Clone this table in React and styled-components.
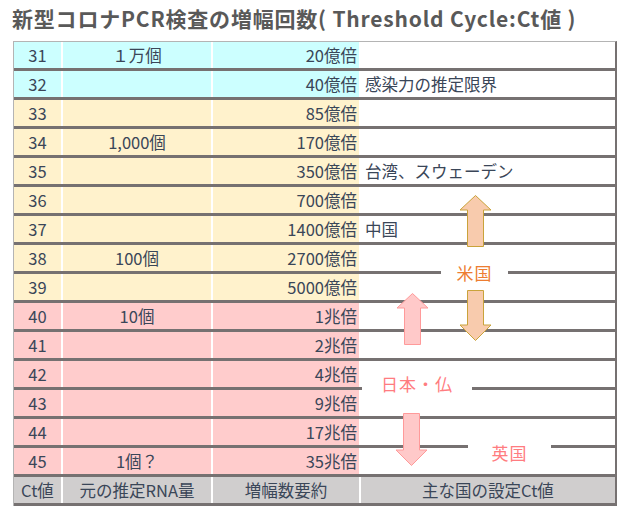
import styled, { createGlobalStyle } from 'styled-components';

const GlobalStyle = createGlobalStyle`
  body {
    margin: 0;
    background: #fff;
    font-family: "Noto Sans CJK JP", "Noto Sans", sans-serif;
  }
`;

const BORDER = '#767171';
const TEXT = '#3a4658';

const BANDS = {
  cyan: '#ccffff',
  cream: '#fff2cc',
  pink: '#ffcccc',
};

const rows = [
  { ct: 31, band: 'cyan', rna: '１万個', amp: '20億倍' },
  { ct: 32, band: 'cyan', amp: '40億倍', note: '感染力の推定限界' },
  { ct: 33, band: 'cream', amp: '85億倍' },
  { ct: 34, band: 'cream', rna: '1,000個', amp: '170億倍' },
  { ct: 35, band: 'cream', amp: '350億倍', note: '台湾、スウェーデン' },
  { ct: 36, band: 'cream', amp: '700億倍' },
  { ct: 37, band: 'cream', amp: '1400億倍', note: '中国' },
  { ct: 38, band: 'cream', rna: '100個', amp: '2700億倍' },
  { ct: 39, band: 'cream', amp: '5000億倍' },
  { ct: 40, band: 'pink', rna: '10個', amp: '1兆倍' },
  { ct: 41, band: 'pink', amp: '2兆倍' },
  { ct: 42, band: 'pink', amp: '4兆倍' },
  { ct: 43, band: 'pink', amp: '9兆倍' },
  { ct: 44, band: 'pink', amp: '17兆倍' },
  { ct: 45, band: 'pink', rna: '1個？', amp: '35兆倍' },
];

const Page = styled.div`
  width: 625px;
  height: 516px;
`;

const Title = styled.h1`
  margin: 0;
  padding-left: 12px;
  height: 41px;
  line-height: 37px;
  font-size: 21px;
  font-weight: 700;
  color: #595959;
  white-space: nowrap;
  letter-spacing: 0.8px;
`;

const Table = styled.div`
  position: relative;
  box-sizing: border-box;
  margin-left: 13px;
  width: 604px;
  border-top: 1px solid #b4b4b4;
  border-left: 1px solid #b4b4b4;
  border-right: 2px solid ${BORDER};
`;

const Row = styled.div`
  display: grid;
  grid-template-columns: 47px 148px 146px 1fr;
  column-gap: 2px;
  background: #fff;
  border-bottom: 3px solid ${BORDER};
`;

const Cell = styled.div`
  height: 26px;
  line-height: 26px;
  font-size: 16.5px;
  color: ${TEXT};
  white-space: nowrap;
  background: ${(p) => p.$bg || '#fff'};
  text-align: ${(p) => p.$align || 'center'};
  padding: ${(p) => (p.$align === 'right' ? '0 2px 0 0' : p.$align === 'left' ? '0 0 0 4px' : '0')};
`;

const Label = styled.div`
  position: absolute;
  height: 22px;
  line-height: 22px;
  background: #fff;
  text-align: center;
  font-size: 17px;
  color: ${(p) => p.$color};
  letter-spacing: 1px;
`;

const Arrow = styled.svg`
  position: absolute;
  overflow: visible;
`;

function UpArrow({ left, top, height, fill, stroke }) {
  return (
    <Arrow style={{ left, top }} width="32" height={height} viewBox={`0 0 32 ${height}`}>
      <path
        d={`M15.5 0.5 L31 15 L23.5 15 L23.5 ${height - 0.5} L7.5 ${height - 0.5} L7.5 15 L0 15 Z`}
        fill={fill}
        stroke={stroke}
        strokeWidth="1"
      />
    </Arrow>
  );
}

function DownArrow({ left, top, height, fill, stroke }) {
  return (
    <Arrow style={{ left, top }} width="32" height={height} viewBox={`0 0 32 ${height}`}>
      <path
        d={`M7.5 0.5 L23.5 0.5 L23.5 ${height - 16} L31 ${height - 16} L15.5 ${height - 0.5} L0 ${height - 16} L7.5 ${height - 16} Z`}
        fill={fill}
        stroke={stroke}
        strokeWidth="1"
      />
    </Arrow>
  );
}

export default function App() {
  const footBg = '#d0cece';
  return (
    <Page>
      <GlobalStyle />
      <Title>新型コロナPCR検査の増幅回数( Threshold Cycle:Ct値 )</Title>
      <Table>
        {rows.map((r) => (
          <Row key={r.ct}>
            <Cell $bg={BANDS[r.band]}>{r.ct}</Cell>
            <Cell $bg={BANDS[r.band]}>{r.rna}</Cell>
            <Cell $bg={BANDS[r.band]} $align="right">{r.amp}</Cell>
            <Cell $align="left">{r.note}</Cell>
          </Row>
        ))}
        <Row>
          <Cell $bg={footBg}>Ct値</Cell>
          <Cell $bg={footBg}>元の推定RNA量</Cell>
          <Cell $bg={footBg}>増幅数要約</Cell>
          <Cell $bg={footBg}>主な国の設定Ct値</Cell>
        </Row>

        <UpArrow left={446} top={153} height={52} fill="#f8cbad" stroke="#c9a33a" />
        <Label $color="#ed7d31" style={{ left: 427, top: 220, width: 67 }}>米国</Label>
        <DownArrow left={446} top={248} height={51} fill="#f8cbad" stroke="#c9a33a" />

        <UpArrow left={383} top={251} height={52} fill="#ffc9c9" stroke="#ff9a9a" />
        <Label $color="#ff7c80" style={{ left: 348, top: 331, width: 110 }}>日本・仏</Label>
        <DownArrow left={382} top={371} height={53} fill="#ffc9c9" stroke="#ff9a9a" />

        <Label $color="#ff7c80" style={{ left: 454, top: 400, width: 83 }}>英国</Label>
      </Table>
    </Page>
  );
}
